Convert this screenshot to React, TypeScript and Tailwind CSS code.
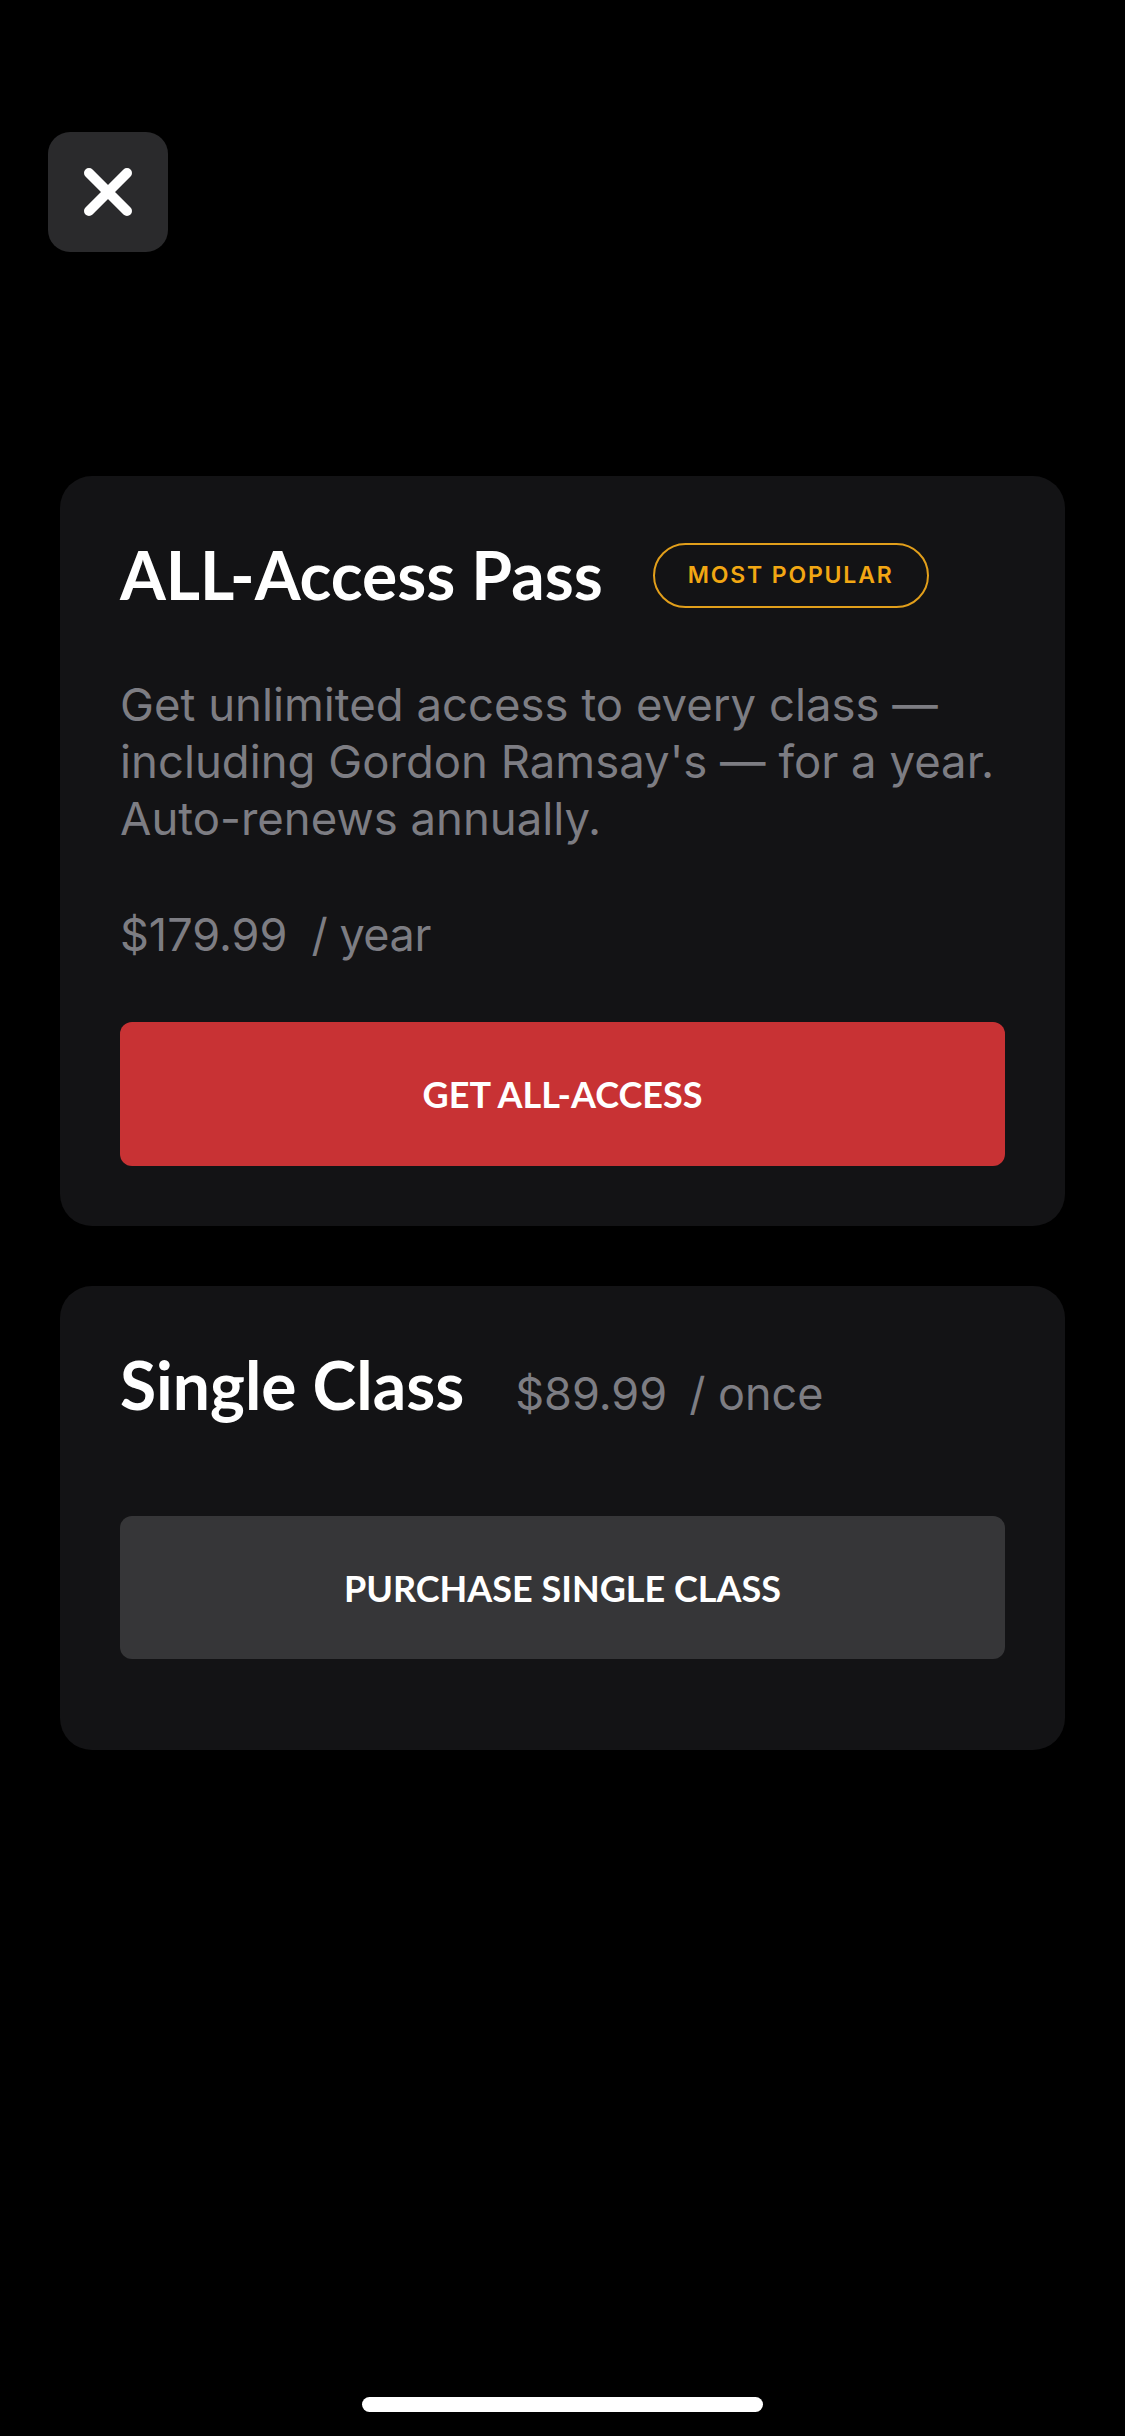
import React from 'react';

const lato = { fontFamily: 'Lato, "Liberation Sans", sans-serif' };
const inter = { fontFamily: 'Inter, "Noto Sans", sans-serif' };

const CloseButton: React.FC = () => (
  <button className="ml-[48px] flex h-[120px] w-[120px] items-center justify-center rounded-[22px] bg-[#2a2a2c]">
    <svg width="120" height="120" viewBox="0 0 120 120" fill="none">
      <path d="M41 41L79 79M79 41L41 79" stroke="white" strokeWidth="10" strokeLinecap="round" />
    </svg>
  </button>
);

const App: React.FC = () => {
  return (
    <div className="min-h-[2436px] w-full bg-black pt-[132px] flex flex-col" style={inter}>
      <CloseButton />

      <div className="mx-[60px] mt-[224px] flex flex-col gap-[60px]">
        {/* all-access card */}
        <div className="rounded-[32px] bg-[#131315] px-[60px] pt-[66px] pb-[60px]">
          <div className="flex items-center">
            <h2 className="text-[66px] leading-none font-bold text-white" style={lato}>
              ALL-Access Pass
            </h2>
            <span className="ml-[50px] flex h-[65px] items-center rounded-full border-2 border-[#e29f1b] px-[33px] text-[23px] font-semibold tracking-[0.08em] text-[#f2a713]">
              MOST POPULAR
            </span>
          </div>
          <p className="mt-[68px] text-[45.5px] leading-[57px] text-[#7d7d83]">
            Get unlimited access to every class — including Gordon Ramsay's — for a year. Auto-renews annually.
          </p>
          <div className="mt-[65px] flex items-baseline text-[45px] leading-none text-[#7d7d83]">
            <span>$179.99</span>
            <span className="ml-[24px] tracking-[-0.01em]">/ year</span>
          </div>
          <button
            className="mt-[65px] flex h-[144px] w-full items-center justify-center rounded-[12px] bg-[#c83234] text-[36px] font-bold text-white"
            style={lato}
          >
            GET ALL-ACCESS
          </button>
        </div>

        {/* single class card */}
        <div className="rounded-[32px] bg-[#131315] px-[60px] pt-[66px] pb-[91px]">
          <div className="flex items-baseline">
            <h2 className="text-[66px] leading-none font-bold text-white" style={lato}>
              Single Class
            </h2>
            <span className="ml-[51px] text-[45px] leading-none text-[#7d7d83]">$89.99</span>
            <span className="ml-[22px] text-[45px] leading-none text-[#7d7d83]">/ once</span>
          </div>
          <button
            className="mt-[98px] flex h-[143px] w-full items-center justify-center rounded-[12px] bg-[#363638] text-[36px] font-bold text-white"
            style={lato}
          >
            PURCHASE SINGLE CLASS
          </button>
        </div>
      </div>

      <div className="mt-auto mb-[24px] flex justify-center">
        <div className="h-[15px] w-[401px] rounded-full bg-white" />
      </div>
    </div>
  );
};

export default App;
